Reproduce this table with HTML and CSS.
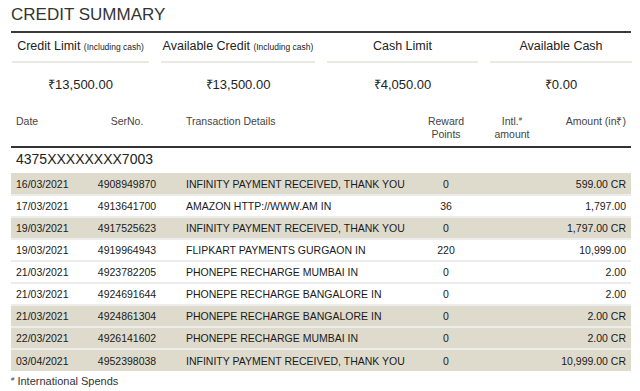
FILE: index.html
```html
<!DOCTYPE html>
<html>
<head>
<meta charset="utf-8">
<link rel="stylesheet" href="styles.css">
</head>
<body>
<div class="page">
  <h1 class="title">CREDIT SUMMARY</h1>
  <div class="summary">
    <div class="cell"><div class="label">Credit Limit <small>(Including cash)</small></div><div class="value">₹13,500.00</div></div>
    <div class="cell"><div class="label">Available Credit <small>(Including cash)</small></div><div class="value">₹13,500.00</div></div>
    <div class="cell"><div class="label">Cash Limit</div><div class="value">₹4,050.00</div></div>
    <div class="cell"><div class="label">Available Cash</div><div class="value">₹0.00</div></div>
  </div>
  <table class="txn">
    <colgroup>
      <col class="c-date"><col class="c-ser"><col class="c-det"><col class="c-rew"><col class="c-intl"><col class="c-amt">
    </colgroup>
    <thead>
      <tr>
        <th class="l">Date</th>
        <th class="c">SerNo.</th>
        <th class="d">Transaction Details</th>
        <th class="c">Reward<br>Points</th>
        <th class="c">Intl.<sup>#</sup><br>amount</th>
        <th class="r">Amount (in₹)</th>
      </tr>
    </thead>
    <tbody>
      <tr class="card"><td colspan="6">4375XXXXXXXX7003</td></tr>
      <tr class="shade"><td class="l">16/03/2021</td><td class="c">4908949870</td><td class="d">INFINITY PAYMENT RECEIVED, THANK YOU</td><td class="c">0</td><td></td><td class="r">599.00 CR</td></tr>
      <tr><td class="l">17/03/2021</td><td class="c">4913641700</td><td class="d">AMAZON HTTP://WWW.AM IN</td><td class="c">36</td><td></td><td class="r">1,797.00</td></tr>
      <tr class="shade"><td class="l">19/03/2021</td><td class="c">4917525623</td><td class="d">INFINITY PAYMENT RECEIVED, THANK YOU</td><td class="c">0</td><td></td><td class="r">1,797.00 CR</td></tr>
      <tr><td class="l">19/03/2021</td><td class="c">4919964943</td><td class="d">FLIPKART PAYMENTS GURGAON IN</td><td class="c">220</td><td></td><td class="r">10,999.00</td></tr>
      <tr><td class="l">21/03/2021</td><td class="c">4923782205</td><td class="d">PHONEPE RECHARGE MUMBAI IN</td><td class="c">0</td><td></td><td class="r">2.00</td></tr>
      <tr><td class="l">21/03/2021</td><td class="c">4924691644</td><td class="d">PHONEPE RECHARGE BANGALORE IN</td><td class="c">0</td><td></td><td class="r">2.00</td></tr>
      <tr class="shade"><td class="l">21/03/2021</td><td class="c">4924861304</td><td class="d">PHONEPE RECHARGE BANGALORE IN</td><td class="c">0</td><td></td><td class="r">2.00 CR</td></tr>
      <tr class="shade"><td class="l">22/03/2021</td><td class="c">4926141602</td><td class="d">PHONEPE RECHARGE MUMBAI IN</td><td class="c">0</td><td></td><td class="r">2.00 CR</td></tr>
      <tr class="shade last"><td class="l">03/04/2021</td><td class="c">4952398038</td><td class="d">INFINITY PAYMENT RECEIVED, THANK YOU</td><td class="c">0</td><td></td><td class="r">10,999.00 CR</td></tr>
    </tbody>
  </table>
  <p class="note"><sup>#</sup> International Spends</p>
</div>
</body>
</html>
```
FILE: styles.css
```css
* { box-sizing: border-box; }
html, body { margin: 0; padding: 0; background: #fff; }
body { font-family: "Liberation Sans", Arial, sans-serif; color: #222; }
.page { padding: 5px 9px 0 11px; width: 640px; }
.title {
  margin: 0;
  font-size: 17px;
  font-weight: normal;
  color: #333;
  line-height: 20px;
  padding-bottom: 6px;
  border-bottom: 2px solid #3a3a3a;
}
.summary {
  display: grid;
  grid-template-columns: 137px 154px 151px 142px;
  column-gap: 12px;
  padding-left: 1px;
}
.cell { display: flex; flex-direction: column; align-items: stretch; }
.label {
  text-align: center;
  font-size: 12.5px;
  color: #222;
  height: 30px;
  line-height: 15px;
  padding-top: 6px;
  white-space: nowrap;
  border-bottom: 2px solid #ebeae2;
}
.label small { font-size: 8.5px; }
.value {
  text-align: center;
  font-size: 13px;
  color: #222;
  padding-top: 14px;
  line-height: 16px;
}
.txn {
  margin-top: 22px;
  width: 620px;
  table-layout: fixed;
  border-collapse: collapse;
  font-size: 10.5px;
}
.c-date { width: 69px; }
.c-ser { width: 94px; }
.c-det { width: 236px; }
.c-rew { width: 72px; }
.c-intl { width: 60px; }
.c-amt { width: 89px; }
.txn th {
  font-weight: normal;
  color: #444;
  font-size: 10.5px;
  line-height: 13px;
  vertical-align: top;
  height: 32px;
  padding: 0 5px;
  border-bottom: 2px solid #333;
}
.txn th sup { font-size: 6px; vertical-align: 4px; line-height: 0; }
.txn td {
  height: 22px;
  padding: 0 5px;
  white-space: nowrap;
  color: #1a1a1a;
  vertical-align: middle;
}
.txn tbody tr { border-bottom: 2px solid #ececec; }
.txn tbody tr.card { border-bottom: none; }
.txn tbody tr.last { border-bottom: none; }
.txn tr.card td {
  font-size: 14px;
  height: 26px;
  line-height: 18px;
  padding-top: 2px;
  vertical-align: top;
  color: #222;
}
.txn tr.shade { background: #dedbcd; }
.l { text-align: left; }
.c { text-align: center; }
.r { text-align: right; }
.d { text-align: left; padding-left: 12px !important; }
.note {
  margin: 4px 0 0;
  font-size: 11px;
  color: #333;
}
.note sup { font-size: 6px; vertical-align: 4px; line-height: 0; }
```
